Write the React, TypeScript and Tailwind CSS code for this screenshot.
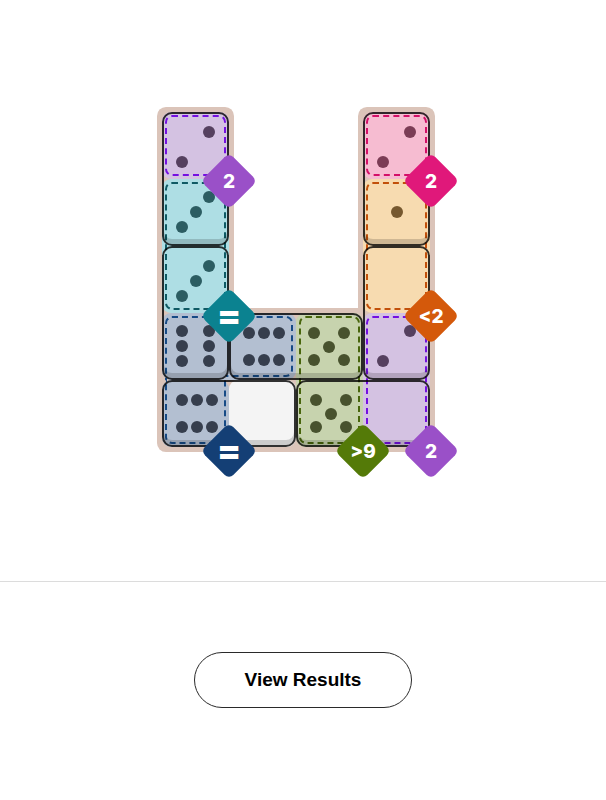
import React from 'react';

// ── Region palette ──────────────────────────────────────────────────────────
type Tone = 'purple' | 'teal' | 'blue' | 'green' | 'pink' | 'peach' | 'blank';

const PIP: Record<Tone, string> = {
  purple: 'bg-[#55405f]',
  teal: 'bg-[#2c5d62]',
  blue: 'bg-[#363e4d]',
  green: 'bg-[#48522e]',
  pink: 'bg-[#7b3c55]',
  peach: 'bg-[#76582f]',
  blank: 'bg-[#555555]',
};

// cell tone by "row-col" (1-based grid lines)
const TONE: Record<string, Tone> = {
  '1-1': 'purple', '2-1': 'teal', '3-1': 'teal', '4-1': 'blue', '4-2': 'blue', '5-1': 'blue',
  '5-2': 'blank', '4-3': 'green', '5-3': 'green', '1-4': 'pink', '2-4': 'peach', '3-4': 'peach',
  '4-4': 'purple', '5-4': 'purple',
};

// ── Pips ────────────────────────────────────────────────────────────────────
const FACES: Record<string, number[]> = {
  '0': [],
  '1': [4],
  '2': [2, 6],
  '3': [2, 4, 6],
  '5': [0, 2, 4, 6, 8],
  '6v': [0, 2, 3, 5, 6, 8],
  '6h': [0, 1, 2, 6, 7, 8],
};

function Face({ value, dir, tone }: { value: number; dir: 'v' | 'h'; tone: Tone }) {
  const key = value === 6 ? `6${dir}` : String(value);
  const on = FACES[key];
  return (
    <div className="flex-1 flex items-center justify-center">
      <div
        className={`grid ${dir === 'v'
          ? 'grid-cols-[repeat(3,13.5px)] grid-rows-[repeat(3,15px)]'
          : 'grid-cols-[repeat(3,15px)] grid-rows-[repeat(3,13.5px)]'}`}>
        {Array.from({ length: 9 }).map((_, i) => (
          <div key={i} className="flex items-center justify-center">
            {on.includes(i) && <div className={`w-3 h-3 shrink-0 rounded-full ${PIP[tone]}`} />}
          </div>
        ))}
      </div>
    </div>
  );
}

// ── Dominoes ────────────────────────────────────────────────────────────────
interface Domino { r: number; c: number; dir: 'v' | 'h'; a: number; b: number; place: string }

const DOMINOES: Domino[] = [
  { r: 1, c: 1, dir: 'v', a: 2, b: 3, place: 'row-start-1 row-span-2 col-start-1' },
  { r: 3, c: 1, dir: 'v', a: 3, b: 6, place: 'row-start-3 row-span-2 col-start-1' },
  { r: 4, c: 2, dir: 'h', a: 6, b: 5, place: 'row-start-4 col-start-2 col-span-2' },
  { r: 5, c: 1, dir: 'h', a: 6, b: 0, place: 'row-start-5 col-start-1 col-span-2' },
  { r: 5, c: 3, dir: 'h', a: 5, b: 0, place: 'row-start-5 col-start-3 col-span-2' },
  { r: 1, c: 4, dir: 'v', a: 2, b: 1, place: 'row-start-1 row-span-2 col-start-4' },
  { r: 3, c: 4, dir: 'v', a: 0, b: 2, place: 'row-start-3 row-span-2 col-start-4' },
];

// ── Regions (fill + dashed outline) ────────────────────────────────────────
const FILLS = [
  'row-start-1 col-start-1 bg-[#d4c2e2]',
  'row-start-2 row-span-2 col-start-1 bg-[#aedee4]',
  'row-start-4 col-start-1 col-span-2 bg-[#b3bfd1]',
  'row-start-5 col-start-1 bg-[#b3bfd1]',
  'row-start-5 col-start-2 bg-[#f4f4f4]',
  'row-start-4 row-span-2 col-start-3 bg-[#c7d3ae]',
  'row-start-4 row-span-2 col-start-4 bg-[#d4c2e2]',
  'row-start-1 col-start-4 bg-[#f6bcd1]',
  'row-start-2 row-span-2 col-start-4 bg-[#f7dbb0]',
];

const DASHES: { place: string; pad: string; line: string }[] = [
  { place: 'row-start-1 col-start-1', pad: 'p-[3px]', line: 'border-2 rounded-[7px] border-[#7410e0]' },
  { place: 'row-start-2 row-span-2 col-start-1', pad: 'p-[3px]', line: 'border-2 rounded-[7px] border-[#0e5a64]' },
  { place: 'row-start-4 col-start-1', pad: 'pt-[3px] pl-[3px]', line: 'border-t-2 border-l-2 rounded-tl-[7px] border-[#164a85]' },
  { place: 'row-start-4 col-start-2', pad: 'pt-[3px] pr-[3px] pb-[3px] -ml-[3px]', line: 'border-t-2 border-r-2 border-b-2 rounded-r-[7px] border-[#164a85]' },
  { place: 'row-start-5 col-start-1', pad: 'pl-[3px] pr-[3px] pb-[3px]', line: 'border-l-2 border-r-2 border-b-2 rounded-b-[7px] border-[#164a85]' },
  { place: 'row-start-4 row-span-2 col-start-3', pad: 'p-[3px]', line: 'border-2 rounded-[7px] border-[#48650c]' },
  { place: 'row-start-4 row-span-2 col-start-4', pad: 'p-[3px]', line: 'border-2 rounded-[7px] border-[#7410e0]' },
  { place: 'row-start-1 col-start-4', pad: 'p-[3px]', line: 'border-2 rounded-[7px] border-[#d30f68]' },
  { place: 'row-start-2 row-span-2 col-start-4', pad: 'p-[3px]', line: 'border-2 rounded-[7px] border-[#c2500a]' },
];

// ── Constraint badges ──────────────────────────────────────────────────────
const BADGES = [
  { label: '2', pos: 'left-[47px] top-[49px]', bg: 'bg-[#9a50c8]' },
  { label: '=', pos: 'left-[47px] top-[184px]', bg: 'bg-[#0b8290]' },
  { label: '=', pos: 'left-[47px] top-[319px]', bg: 'bg-[#143f75]' },
  { label: '>9', pos: 'left-[181px] top-[319px]', bg: 'bg-[#547a08]' },
  { label: '2', pos: 'left-[249px] top-[319px]', bg: 'bg-[#9a50c8]' },
  { label: '2', pos: 'left-[249px] top-[49px]', bg: 'bg-[#e0187a]' },
  { label: '<2', pos: 'left-[249px] top-[184px]', bg: 'bg-[#d4590b]' },
];

function Board() {
  return (
    <div className="relative mr-[14px]">
      <div className="grid grid-cols-[repeat(4,67px)] grid-rows-[repeat(5,67px)]">
        {/* tan board */}
        <div className="row-start-1 row-span-3 col-start-1 bg-[#dbc4b9] rounded-t-[4px] shadow-[0_0_0_5px_#dbc4b9]" />
        <div className="row-start-1 row-span-3 col-start-4 bg-[#dbc4b9] rounded-t-[4px] shadow-[0_0_0_5px_#dbc4b9]" />
        <div className="row-start-4 row-span-2 col-start-1 col-span-4 bg-[#dbc4b9] rounded-b-[4px] shadow-[0_0_0_5px_#dbc4b9]" />

        {/* region fills */}
        {FILLS.map((f, i) => (
          <div key={`f${i}`} className={`${f} rounded-[9px]`} />
        ))}

        {/* dashed region outlines */}
        {DASHES.map((d, i) => (
          <div key={`d${i}`} className={`${d.place} ${d.pad} flex`}>
            <div className={`flex-1 border-dashed ${d.line}`} />
          </div>
        ))}

        {/* dominoes */}
        {DOMINOES.map((d, i) => {
          const t1 = TONE[`${d.r}-${d.c}`];
          const t2 = d.dir === 'v' ? TONE[`${d.r + 1}-${d.c}`] : TONE[`${d.r}-${d.c + 1}`];
          return (
            <div
              key={`m${i}`}
              className={`${d.place} flex ${d.dir === 'v' ? 'flex-col' : 'flex-row'}
                border-2 border-black/80 rounded-[10px] shadow-[inset_0_-5px_0_rgba(0,0,0,0.16)]`}>
              <Face value={d.a} dir={d.dir} tone={t1} />
              <Face value={d.b} dir={d.dir} tone={t2} />
            </div>
          );
        })}
      </div>

      {/* badges sit on top of the board corners */}
      {BADGES.map((b, i) => (
        <div key={`b${i}`} className={`absolute ${b.pos} w-10 h-10 flex items-center justify-center`}>
          <div className={`absolute inset-0 rotate-45 rounded-[6px] ${b.bg}`} />
          <span className={`relative text-white font-['Inter',sans-serif] font-extrabold leading-none
            ${b.label === '=' ? 'text-[36px] -mt-[3px]' : 'text-[19px]'}`}>
            {b.label}
          </span>
        </div>
      ))}
    </div>
  );
}

export default function App() {
  return (
    <div className="w-[606px] h-[800px] bg-white font-['Liberation_Sans',Arial,sans-serif]">
      <div className="h-[582px] border-b border-[#dcdcdc] pt-[112px] flex justify-center items-start">
        <Board />
      </div>
      <div className="pt-[70px] flex justify-center">
        <button className="w-[218px] h-[56px] rounded-full border border-[#2a2a2a] bg-white text-[19px] font-bold text-black">
          View Results
        </button>
      </div>
    </div>
  );
}
